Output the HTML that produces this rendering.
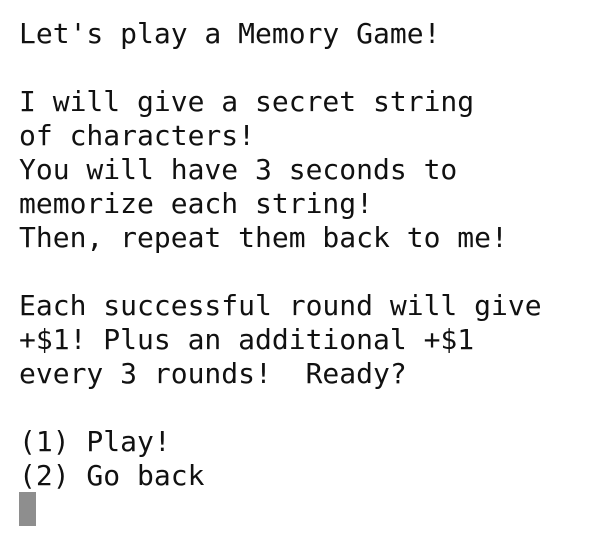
<!DOCTYPE html>
<html><head><style>
html,body{margin:0;padding:0;background:#fff;width:614px;height:548px;overflow:hidden}
pre{margin:0;position:absolute;left:19px;top:17px;font-family:"DejaVu Sans Mono","Liberation Mono",monospace;font-size:28px;line-height:34px;color:#111;letter-spacing:0}
.cur{position:absolute;left:19px;top:492px;width:17px;height:34px;background:#8e8e8e}
</style></head><body>
<pre>Let's play a Memory Game!

I will give a secret string
of characters!
You will have 3 seconds to
memorize each string!
Then, repeat them back to me!

Each successful round will give
+$1! Plus an additional +$1
every 3 rounds!  Ready?

(1) Play!
(2) Go back</pre>
<div class="cur"></div>
</body></html>
